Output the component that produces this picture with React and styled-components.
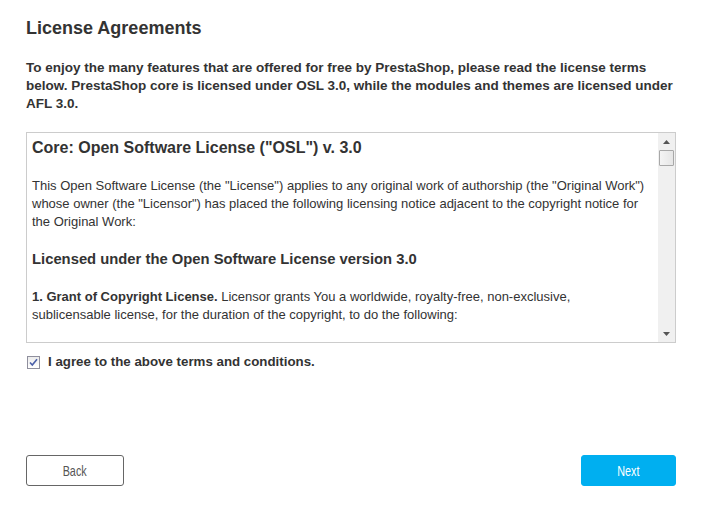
import { useState } from 'react';
import styled, { createGlobalStyle } from 'styled-components';

const GlobalStyle = createGlobalStyle`
    body {
        margin: 0;
        background: #fff;
        font-family: "Liberation Sans", Arial, sans-serif;
        color: #333;
    }
`;

const Page = styled.div`
    padding: 17px 25px 0 26px;
    width: 650px;
`;

const Title = styled.h2`
    margin: 0;
    font-size: 18px;
    line-height: 22px;
    font-weight: bold;
    color: #333;
`;

const Intro = styled.p`
    margin: 20px 0 0;
    font-size: 13.5px;
    line-height: 18px;
    font-weight: bold;
    color: #333;
`;

const LicenseBox = styled.div`
    margin-top: 19px;
    height: 209px;
    border: 1px solid #ccc;
    display: flex;
    overflow: hidden;
`;

const LicenseText = styled.div`
    flex: 1;
    overflow: hidden;
    padding: 5px 10px 0 5px;
    font-size: 13px;
    line-height: 18px;
    color: #333;
`;

const LicenseHeading = styled.h3`
    margin: 0;
    font-size: 16px;
    line-height: 20px;
    font-weight: bold;
`;

const LicenseSub = styled.h4`
    margin: 0 0 18px;
    font-size: 14.8px;
    line-height: 18px;
    font-weight: bold;
`;

const Para = styled.p`
    margin: ${props => props.$top || 0}px 0 19px;
`;

const ScrollTrack = styled.div`
    width: 17px;
    background: #f0f0f0;
    display: flex;
    flex-direction: column;
    align-items: center;
`;

const ArrowButton = styled.div`
    height: 17px;
    width: 17px;
    display: flex;
    align-items: center;
    justify-content: center;
`;

const Thumb = styled.div`
    width: 13px;
    height: 14px;
    border: 1px solid #a8a8a8;
    border-radius: 1px;
    background: linear-gradient(to right, #f4f4f4, #e6e6e6);
`;

const TrackFill = styled.div`
    flex: 1;
`;

const AgreeRow = styled.label`
    margin-top: 10px;
    display: flex;
    align-items: center;
    gap: 8px;
    font-size: 13.3px;
    line-height: 18px;
    font-weight: bold;
    color: #333;
    cursor: pointer;
`;

const CheckBox = styled.span`
    width: 11px;
    height: 11px;
    margin-left: 1px;
    border: 1px solid #8f8f9d;
    background: linear-gradient(#ececec, #fff);
    display: flex;
    align-items: center;
    justify-content: center;
`;

const ButtonRow = styled.div`
    margin-top: 84px;
    display: flex;
    justify-content: space-between;
`;

const NavButton = styled.button`
    height: 31px;
    width: ${props => props.$width}px;
    border-radius: 3px;
    font-family: "Liberation Sans", Arial, sans-serif;
    font-size: 15px;
    cursor: pointer;
    border: 1px solid ${props => (props.$primary ? '#00aff0' : '#666')};
    background: ${props => (props.$primary ? '#00aff0' : '#fff')};
    color: ${props => (props.$primary ? '#fff' : '#555')};
`;

// the reference button font is a narrow face; squeeze Arial to match
const ButtonLabel = styled.span`
    display: inline-block;
    transform: scaleX(0.72);
`;

function ArrowIcon({ down }) {
    return (
        <svg width="7" height="4" viewBox="0 0 7 4">
            {down ? <path d="M0 0h7L3.5 4z" fill="#555" /> : <path d="M0 4h7L3.5 0z" fill="#555" />}
        </svg>
    );
}

export default function App() {
    const [agreed, setAgreed] = useState(true);

    return (
        <Page>
            <GlobalStyle />
            <Title>License Agreements</Title>
            <Intro>
                To enjoy the many features that are offered for free by PrestaShop, please read the license terms
                below. PrestaShop core is licensed under OSL 3.0, while the modules and themes are licensed under
                AFL 3.0.
            </Intro>
            <LicenseBox>
                <LicenseText>
                    <LicenseHeading>Core: Open Software License ("OSL") v. 3.0</LicenseHeading>
                    <Para $top={19}>
                        This Open Software License (the "License") applies to any original work of authorship (the
                        "Original Work") whose owner (the "Licensor") has placed the following licensing notice
                        adjacent to the copyright notice for the Original Work:
                    </Para>
                    <LicenseSub>Licensed under the Open Software License version 3.0</LicenseSub>
                    <Para $top={20}>
                        <b>1. Grant of Copyright License.</b> Licensor grants You a worldwide, royalty-free,
                        non-exclusive, sublicensable license, for the duration of the copyright, to do the
                        following:
                    </Para>
                </LicenseText>
                <ScrollTrack>
                    <ArrowButton>
                        <ArrowIcon />
                    </ArrowButton>
                    <Thumb />
                    <TrackFill />
                    <ArrowButton>
                        <ArrowIcon down />
                    </ArrowButton>
                </ScrollTrack>
            </LicenseBox>
            <AgreeRow onClick={() => setAgreed(!agreed)}>
                <CheckBox>
                    {agreed && (
                        <svg width="9" height="9" viewBox="0 0 9 9">
                            <path d="M1 4.5l2.3 2.5L8 1.2" stroke="#4a5fa8" strokeWidth="1.6" fill="none" />
                        </svg>
                    )}
                </CheckBox>
                I agree to the above terms and conditions.
            </AgreeRow>
            <ButtonRow>
                <NavButton $width={98}>
                    <ButtonLabel>Back</ButtonLabel>
                </NavButton>
                <NavButton $width={95} $primary>
                    <ButtonLabel>Next</ButtonLabel>
                </NavButton>
            </ButtonRow>
        </Page>
    );
}
